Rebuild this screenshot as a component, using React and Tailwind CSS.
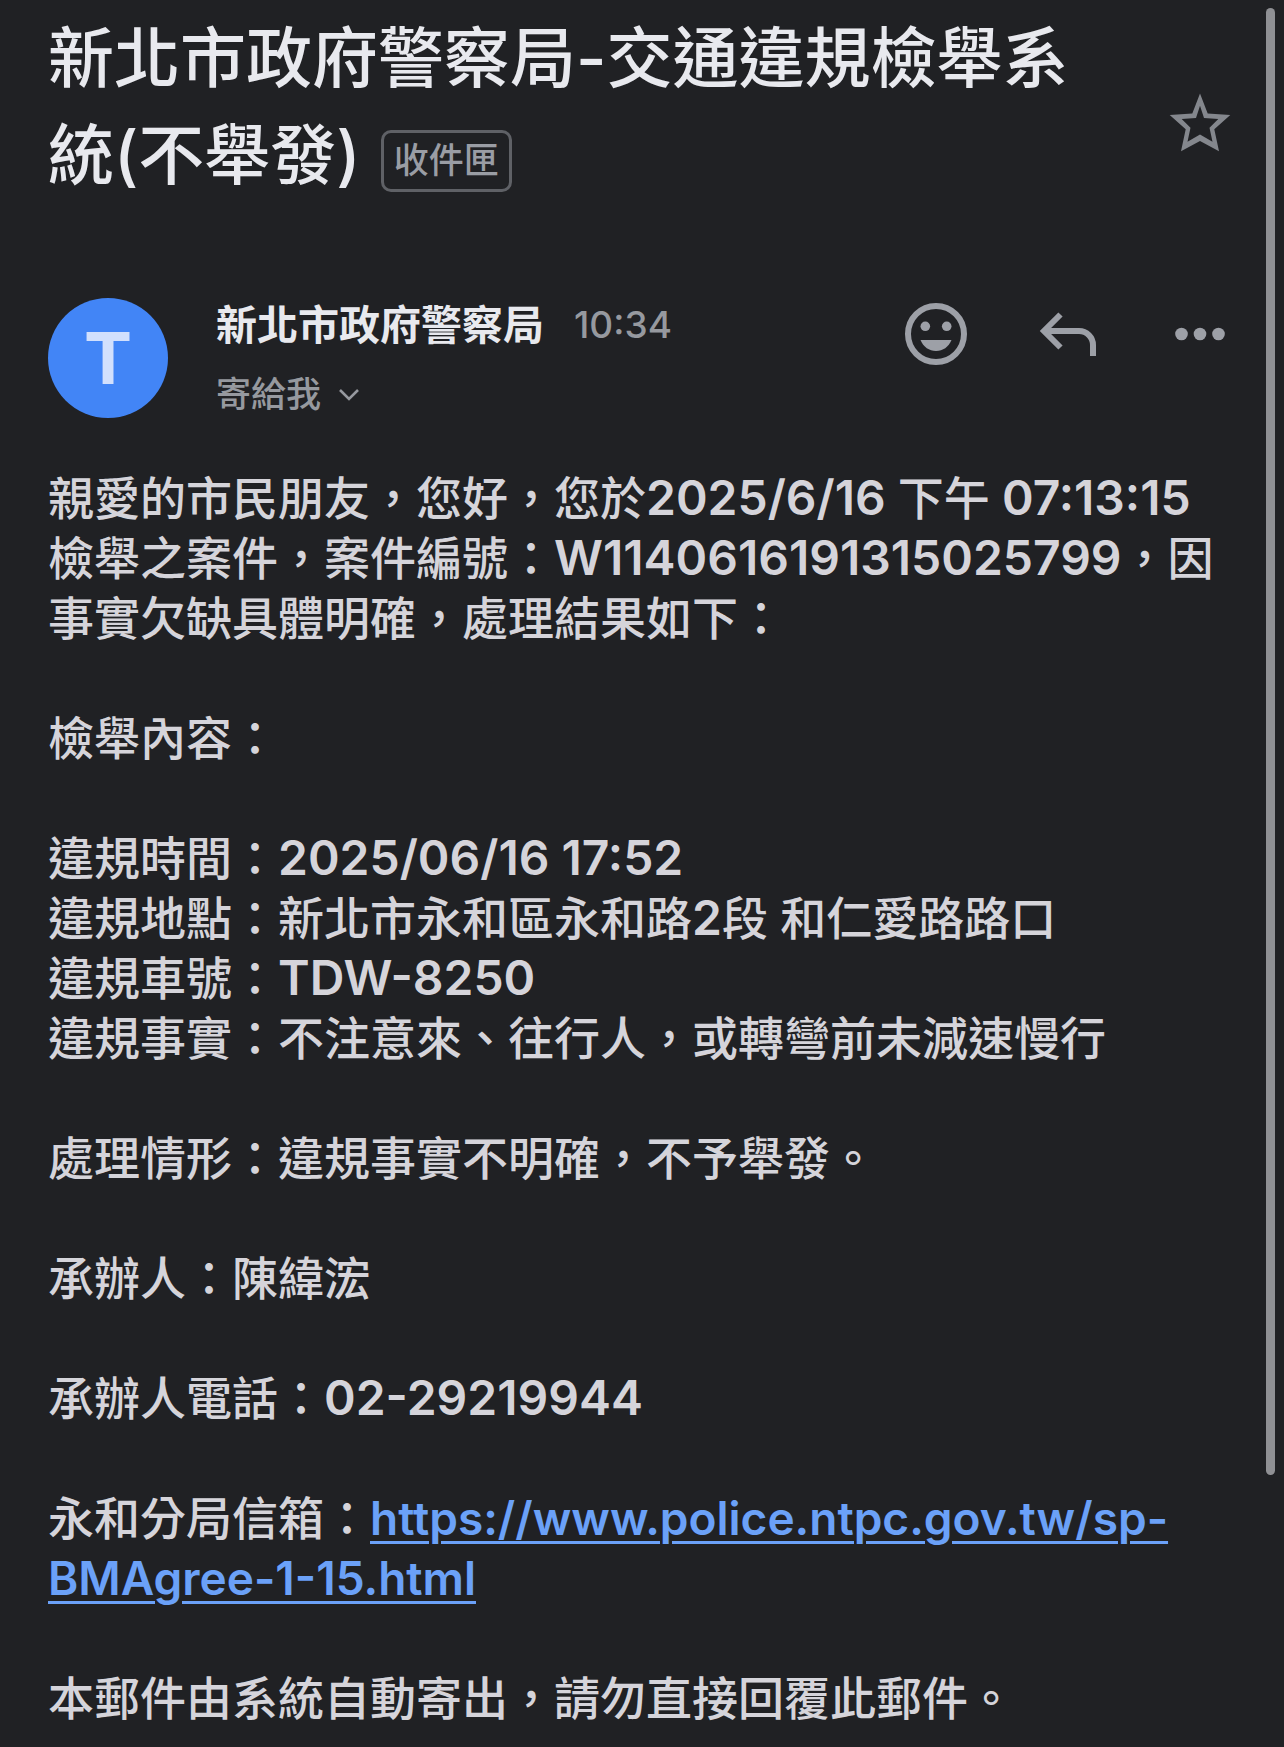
import React from 'react';

const StarIcon = () => (
  <svg viewBox="0 0 72 72" className="size-[72px]" fill="currentColor" fillRule="evenodd">
    <path d="M36 5.5 L43.7 25.5 L66.3 27 L50.3 41.3 L55 63.3 L36 53 L17 63.3 L21.7 41.3 L5.7 27 L28.3 25.5 Z M36 17.7 L32 30 L17.7 31 L26.5 39.7 L23.5 53.7 L36 46.5 L48.5 53.7 L45.5 39.7 L54.3 31 L40 30 Z" />
  </svg>
);

const SmileIcon = () => (
  <svg viewBox="0 0 72 72" className="size-[72px]" fill="currentColor">
    <circle cx="36" cy="36" r="28" fill="none" stroke="currentColor" strokeWidth="6" />
    <circle cx="25.3" cy="28.3" r="4.8" />
    <circle cx="46.7" cy="28.3" r="4.8" />
    <path d="M20.5 42 H51.5 C48.5 49 43 53 36 53 C29 53 23.5 49 20.5 42 Z" />
  </svg>
);

const ReplyIcon = () => (
  <svg viewBox="0 0 72 72" className="size-[72px]" fill="none" stroke="currentColor" strokeWidth="6">
    <path d="M28.5 16.5 L12 33 L28.5 49.5" />
    <path d="M13 33 H47 A14 14 0 0 1 61 47 V58" />
  </svg>
);

const MoreIcon = () => (
  <svg viewBox="0 0 72 72" className="size-[72px]" fill="currentColor">
    <circle cx="17.5" cy="36" r="6.3" />
    <circle cx="36" cy="36" r="6.3" />
    <circle cx="54.5" cy="36" r="6.3" />
  </svg>
);

const ChevronIcon = () => (
  <svg viewBox="0 0 24 24" className="size-6" fill="none" stroke="currentColor" strokeWidth="2.6">
    <path d="M3 8 L12 17 L21 8" />
  </svg>
);

// numbers, dates and plates sit a little heavier than the Chinese text
const Latin = ({ children }) => <span className="text-[48px] font-semibold">{children}</span>;

const details = [
  { label: '違規時間', value: <Latin>2025/06/16 17:52</Latin> },
  { label: '違規地點', value: <>新北市永和區永和路<Latin>2</Latin>段 和仁愛路路口</> },
  { label: '違規車號', value: <Latin>TDW-8250</Latin> },
  { label: '違規事實', value: '不注意來、往行人，或轉彎前未減速慢行' },
];

const Subject = () => (
  <header className="flex items-end gap-[72px]">
    <h1 className="flex-1 text-[66px] leading-[97px] font-medium text-[#e8e9ee]">
      新北市政府警察局-交通違規檢舉系統(不舉發)
      <span className="ml-5 inline-flex h-[62px] items-center rounded-[10px] border-[3px] border-[#5f6166] px-[10px] align-middle text-[35px] leading-none text-[#9a9da4]">
        收件匣
      </span>
    </h1>
    <button type="button" aria-label="加上星號" className="mb-11 text-[#84878d]">
      <StarIcon />
    </button>
  </header>
);

const Sender = () => (
  <section className="mt-[94px] flex items-start">
    <div className="flex size-[120px] items-center justify-center rounded-full bg-[#4285f6] text-[72px] leading-none font-bold text-[#d2e0fd]">
      T
    </div>
    <div className="ml-12 flex-1">
      <div className="flex items-center gap-[30px] leading-[54px]">
        <span className="text-[41px] font-bold text-[#e8e9ee]">新北市政府警察局</span>
        <time className="text-[37px] font-medium text-[#96999f]">10:34</time>
      </div>
      <button type="button" className="mt-4 flex items-center gap-4 text-[35px] leading-[52px] font-medium text-[#96999f]">
        寄給我
        <ChevronIcon />
      </button>
    </div>
    <div className="flex gap-[60px] text-[#9da0a7]">
      <button type="button" aria-label="新增表情符號回應">
        <SmileIcon />
      </button>
      <button type="button" aria-label="回覆">
        <ReplyIcon />
      </button>
      <button type="button" aria-label="更多選項">
        <MoreIcon />
      </button>
    </div>
  </section>
);

const Body = () => (
  <article className="mt-12 space-y-[60px] text-[46px] leading-[60px] font-medium text-[#d5d4da]">
    <p>
      親愛的市民朋友，您好，您於<Latin>2025/6/16 </Latin>下午<Latin> 07:13:15</Latin>
      <br />
      檢舉之案件，案件編號：<Latin>W1140616191315025799</Latin>，因
      <br />
      事實欠缺具體明確，處理結果如下：
    </p>
    <p>檢舉內容：</p>
    <div>
      {details.map((item) => (
        <p key={item.label}>
          {item.label}：{item.value}
        </p>
      ))}
    </div>
    <p>處理情形：違規事實不明確，不予舉發。</p>
    <p>承辦人：陳緯浤</p>
    <p>
      承辦人電話：<Latin>02-29219944</Latin>
    </p>
    <p>
      永和分局信箱：
      <a
        href="https://www.police.ntpc.gov.tw/sp-BMAgree-1-15.html"
        className="font-semibold text-[#6ba1f8] underline decoration-[3px] underline-offset-[6px]"
      >
        https://www.police.ntpc.gov.tw/sp-BMAgree-1-15.html
      </a>
    </p>
    <p>本郵件由系統自動寄出，請勿直接回覆此郵件。</p>
  </article>
);

const App = () => {
  return (
    <div
      lang="zh-TW"
      className="relative min-h-screen w-full overflow-hidden bg-[#202124] font-['Inter','Noto_Sans_CJK_TC',sans-serif]"
    >
      <main className="px-12 pt-[10px] pb-3">
        <Subject />
        <Sender />
        <Body />
      </main>
      {/* scroll indicator */}
      <div className="absolute top-2 right-[9px] h-[84%] w-[9px] rounded-full bg-[#8f9094]" />
    </div>
  );
};

export default App;
